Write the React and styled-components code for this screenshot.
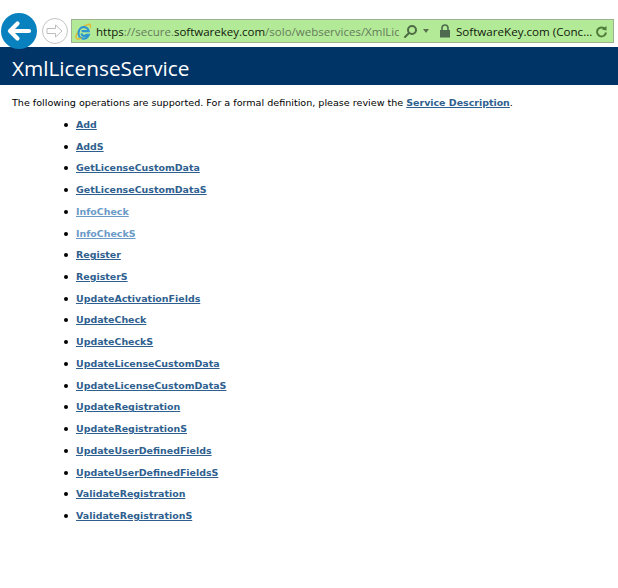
import styled, { createGlobalStyle } from 'styled-components';

const operations = [
  { name: 'Add' },
  { name: 'AddS' },
  { name: 'GetLicenseCustomData' },
  { name: 'GetLicenseCustomDataS' },
  { name: 'InfoCheck', visited: true },
  { name: 'InfoCheckS', visited: true },
  { name: 'Register' },
  { name: 'RegisterS' },
  { name: 'UpdateActivationFields' },
  { name: 'UpdateCheck' },
  { name: 'UpdateCheckS' },
  { name: 'UpdateLicenseCustomData' },
  { name: 'UpdateLicenseCustomDataS' },
  { name: 'UpdateRegistration' },
  { name: 'UpdateRegistrationS' },
  { name: 'UpdateUserDefinedFields' },
  { name: 'UpdateUserDefinedFieldsS' },
  { name: 'ValidateRegistration' },
  { name: 'ValidateRegistrationS' },
];

const GlobalStyle = createGlobalStyle`
  html, body {
    margin: 0;
    background: #fff;
  }
`;

const Page = styled.div`
  width: 618px;
  height: 588px;
  overflow: hidden;
  font-family: "DejaVu Sans", Verdana, sans-serif;
  color: #000;
`;

const Chrome = styled.div`
  height: 47px;
  display: flex;
  align-items: flex-start;
  padding: 13px 4px 0 1px;
  box-sizing: border-box;
`;

const BackButton = styled.div`
  width: 36px;
  height: 36px;
  flex: none;
  border-radius: 50%;
  background: #0a81bf;
  display: flex;
  align-items: center;
  justify-content: center;
`;

const ForwardButton = styled.div`
  width: 24px;
  height: 24px;
  flex: none;
  margin: 5px 3px 0 5px;
  border: 1px solid #c4c4c4;
  border-radius: 50%;
  display: flex;
  align-items: center;
  justify-content: center;
`;

const AddressBar = styled.div`
  flex: 1;
  min-width: 0;
  height: 24px;
  margin-top: 6px;
  padding: 0 5px 0 3px;
  box-sizing: border-box;
  display: flex;
  align-items: center;
  background: #b3ea98;
  border: 1px solid #9bb38e;
  font-family: "Open Sans", "Noto Sans", sans-serif;
  white-space: nowrap;
`;

const Url = styled.span`
  flex: none;
  margin-left: 4px;
  width: 303px;
  overflow: hidden;
  font-size: 11.5px;
  color: #657a5b;
`;

const Strong = styled.span`
  color: #10180c;
`;

const Icon = styled.svg`
  flex: none;
  margin-left: ${({ $left }) => $left || 0}px;
`;

const Caret = styled.span`
  flex: none;
  width: 0;
  height: 0;
  margin: 0 9px 0 5px;
  border: 3px solid transparent;
  border-top: 4px solid #59704f;
  border-bottom: 0;
`;

const Owner = styled.span`
  flex: 1;
  margin-left: 4px;
  font-size: 11.6px;
  color: #10180c;
`;

const Banner = styled.h1`
  height: 38px;
  margin: 0;
  padding: 4px 0 0 12px;
  box-sizing: border-box;
  background: #003366;
  color: #fff;
  font-family: "Open Sans", "Noto Sans", sans-serif;
  font-size: 20.8px;
  font-weight: 400;
  line-height: 34px;
`;

const Intro = styled.p`
  margin: 11px 0 0 12px;
  font-size: 9.58px;
  line-height: 13px;
`;

const DocLink = styled.a`
  color: ${({ $visited }) => ($visited ? '#6a9ac7' : '#2f5f8f')};
  font-size: 9.45px;
  font-weight: bold;
  text-decoration: underline;
`;

const Operations = styled.ul`
  margin: 8px 0 0;
  padding: 0 0 0 64px;
  list-style: none;
`;

const Operation = styled.li`
  height: 21.72px;
  display: flex;
  gap: 8px;
  line-height: 13px;
  padding-top: 1px;
  box-sizing: border-box;

  &::before {
    content: '';
    flex: none;
    width: 4px;
    height: 4px;
    margin-top: 5px;
    border-radius: 50%;
    background: #000;
  }
`;

const IeLogo = () => (
  <Icon width="17" height="17" viewBox="0 0 17 17" fill="none">
    <path d="M1.500 12C3.500 6.500 8.500 2.500 13.500 1.300c2-.3 2.700 1.200 1.500 3.700" stroke="#e3b52c" strokeWidth="1.300" />
    <path d="M3.800 9a5 5 0 0 1 9.900-.8H6.600m-.2 2.300a3 3 0 0 0 5.300 1.300h2.100A5.100 5.100 0 0 1 3.800 9" stroke="#2e97d2" strokeWidth="2.200" />
    <path d="M1.700 10.500C.4 14 1 16 3 16c1.300 0 2.600-.5 3.700-1.300" stroke="#e3b52c" strokeWidth="1.300" />
  </Icon>
);

const App = () => (
  <Page>
    <GlobalStyle />
    <Chrome>
      <BackButton>
        <svg width="26" height="22" viewBox="0 0 26 22" fill="none" stroke="#fff" strokeWidth="4.2" strokeLinecap="round" strokeLinejoin="round">
          <path d="M23 11H4M11.500 3.500 4 11l7.500 7.500" />
        </svg>
      </BackButton>
      <ForwardButton>
        <svg width="18" height="16" viewBox="0 0 18 16" fill="none" stroke="#bdbdbd" strokeWidth="1" strokeLinejoin="round">
          <path d="M1 5.500h8.500V2l6.500 6-6.500 6v-3.500H1z" />
        </svg>
      </ForwardButton>
      <AddressBar>
        <IeLogo />
        <Url>
          <Strong>https</Strong>://secure.<Strong>softwarekey.com</Strong>/solo/webservices/XmlLicenseService.asmx
        </Url>
        <Icon $left={4} width="15" height="15" viewBox="0 0 15 15" fill="none" stroke="#4d6b45" strokeWidth="2">
          <circle cx="9" cy="6" r="4" />
          <path d="M6 9 2 13" strokeLinecap="round" />
        </Icon>
        <Caret />
        <Icon width="14" height="14" viewBox="0 0 14 14">
          <path d="M4 6V4a3 3 0 0 1 6 0v2" fill="none" stroke="#4f6b4f" strokeWidth="1.600" />
          <rect x="2" y="6" width="10" height="7.500" fill="#4f6b4f" />
        </Icon>
        <Owner>SoftwareKey.com (Conc...</Owner>
        <Icon width="13" height="13" viewBox="0 0 13 13" fill="none" stroke="#4f7a3a" strokeWidth="2">
          <path d="M9.800 3.800A4.500 4.500 0 1 0 11 7.500" />
          <path d="M7 4.500 11.500 1v4.500z" fill="#4f7a3a" strokeWidth="0" />
        </Icon>
      </AddressBar>
    </Chrome>
    <Banner>XmlLicenseService</Banner>
    <Intro>
      The following operations are supported. For a formal definition, please review the{' '}
      <DocLink href="#">Service Description</DocLink>.
    </Intro>
    <Operations>
      {operations.map(({ name, visited }) => (
        <Operation key={name}>
          <DocLink href="#" $visited={visited}>{name}</DocLink>
        </Operation>
      ))}
    </Operations>
  </Page>
);

export default App;
